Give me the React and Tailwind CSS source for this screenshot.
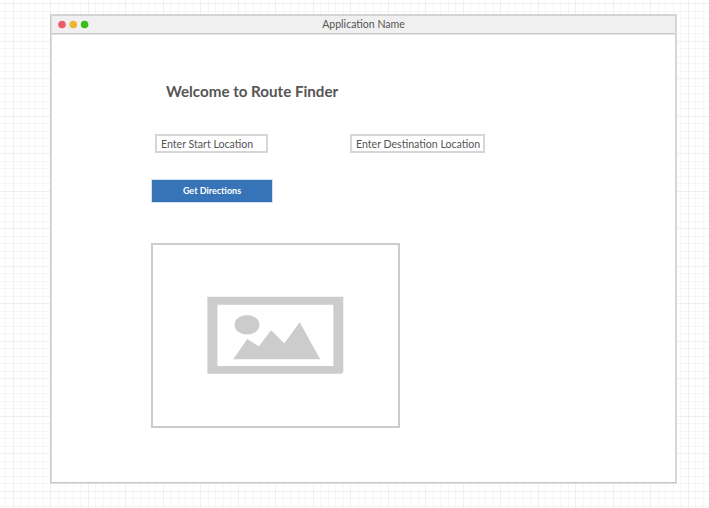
const columns = Array.from({ length: 95 }, (_, i) => ({ at: Math.floor(5.5 + 7.5 * i), major: i % 5 === 1 }));
const rows = Array.from({ length: 68 }, (_, i) => ({ at: Math.floor(3.5 + 7.5 * i), major: i % 5 === 0 }));

function GridPaper() {
  return (
    <svg className="absolute inset-0" width="709" height="508" shapeRendering="crispEdges" aria-hidden="true">
      {columns.map((c) => (
        <rect key={c.at} x={c.at} y="0" width="1" height="508" fill="#000" fillOpacity={c.major ? 0.055 : 0.03} />
      ))}
      {rows.map((r) => (
        <rect key={r.at} x="0" y={r.at} width="709" height="1" fill="#000" fillOpacity={r.major ? 0.055 : 0.03} />
      ))}
    </svg>
  );
}

function TitleBar() {
  return (
    <header className="grid h-[18px] grid-cols-3 items-center border-b border-[#cbcbcb] bg-[#f0f0f0] px-1.5">
      <svg width="32" height="9" viewBox="0 0 32 9" aria-hidden="true">
        <circle cx="4" cy="4.5" r="3.8" fill="#ee5c6c" />
        <circle cx="15.3" cy="4.5" r="3.8" fill="#eeb62f" />
        <circle cx="26.6" cy="4.5" r="3.8" fill="#3cbc1c" />
      </svg>
      <h1 className="-mt-px text-center text-[10.55px] leading-4 whitespace-nowrap">Application Name</h1>
    </header>
  );
}

function Placeholder() {
  return (
    <div className="mt-[41px] flex h-[185px] w-[249px] items-center justify-center border-2 border-[#ccc] pb-px">
      <svg width="137" height="78" viewBox="207 296 137 78" fill="#ccc">
        <path fillRule="evenodd" d="M207.4 296.7H343.3V371.7L341.5 373.7H207.4ZM217.4 304.8V366H333.4V304.8Z" />
        <ellipse cx="247" cy="324.7" rx="12.4" ry="9.8" />
        <path d="M233.2 359.2L247.3 339L259 346.3L271 330.3L284.3 343.3L299.7 322.2L320.2 359.2Z" />
      </svg>
    </div>
  );
}

export default function App() {
  return (
    <div className="relative h-[508px] w-[709px] overflow-hidden bg-white pt-[14px] pl-[50px] font-[Lato,sans-serif] text-[#555]">
      <GridPaper />
      <div className="relative h-[470px] w-[627px] border border-t-[#d6d6d6] border-r-[#d8d8d8] border-b-[#dedede] border-l-[#c8c8c8] bg-white">
        <div className="h-full border border-t-[#d2d2d2] border-r-[#d4d4d4] border-b-[#c8c8c8] border-l-[#e0e0e0]">
          <TitleBar />
          <main className="border-t border-[#e2e2e2] pl-[99px]">
            <h2 className="mt-[44px] ml-[15px] text-[15.15px] leading-6 font-bold whitespace-nowrap">Welcome to Route Finder</h2>
            <div className="mt-[31px] ml-1 flex gap-[82px]">
              <div className="h-[19px] w-[113px] border-2 border-[#d6d6d6] pl-1 text-[10.6px] leading-4 whitespace-nowrap">Enter Start Location</div>
              <div className="h-[19px] w-[135px] border-2 border-[#d6d6d6] pl-1 text-[10.6px] leading-4 whitespace-nowrap">Enter Destination Location</div>
            </div>
            <button className="mt-[27px] ml-px block h-[22px] w-[120px] bg-[#3673b7] text-center text-[9px] leading-[22px] font-bold whitespace-nowrap text-white shadow-[0_0_0_1px_#d3e0ef]">
              Get Directions
            </button>
            <Placeholder />
          </main>
        </div>
      </div>
    </div>
  );
}
